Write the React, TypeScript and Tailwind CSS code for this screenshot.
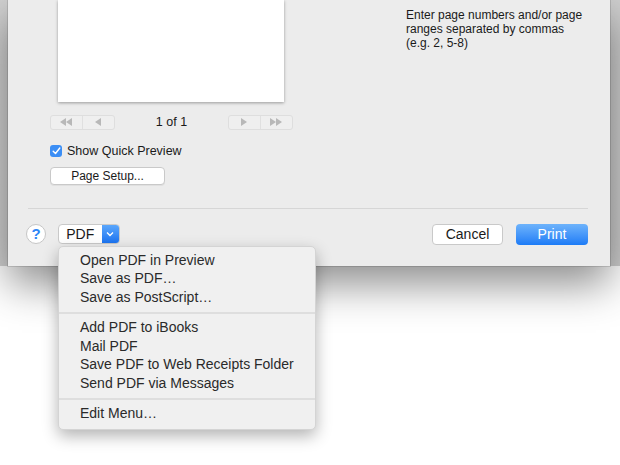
import React from "react";

const font = { fontFamily: '"Liberation Sans", Arial, sans-serif' };

function Tri({ dir }: { dir: "l" | "r" }) {
  return (
    <svg width="6" height="8" viewBox="0 0 6 8">
      {dir === "l" ? <path d="M6 0 L0 4 L6 8 Z" fill="#b8b8b8" /> : <path d="M0 0 L6 4 L0 8 Z" fill="#b8b8b8" />}
    </svg>
  );
}

function NavGroup({ double }: { double: "l" | "r" }) {
  const left = double === "l";
  return (
    <div className="flex h-[15px] w-[65px] rounded-[3px] border border-[#dedede] bg-[#efefef]">
      <div className="flex w-1/2 items-center justify-center border-r border-[#e0e0e0]">
        {left ? (
          <div className="flex"><Tri dir="l" /><Tri dir="l" /></div>
        ) : (
          <Tri dir="r" />
        )}
      </div>
      <div className="flex w-1/2 items-center justify-center">
        {left ? <Tri dir="l" /> : <div className="flex"><Tri dir="r" /><Tri dir="r" /></div>}
      </div>
    </div>
  );
}

const items1 = ["Open PDF in Preview", "Save as PDF…", "Save as PostScript…"];
const items2 = ["Add PDF to iBooks", "Mail PDF", "Save PDF to Web Receipts Folder", "Send PDF via Messages"];

export default function App() {
  return (
    <div className="relative h-[465px] w-[620px] overflow-hidden bg-white" style={font}>
      <div className="h-[266px] w-[620px] bg-gradient-to-r from-[#d2d2d2] via-[#c9c9c9] to-[#cfcfcf] pt-0 pl-[8px] pr-[10px]">
        <div className="relative h-[266px] w-[602px] bg-[#ececec] shadow-[0_18px_40px_rgba(0,0,0,0.45),0_0_0_1px_rgba(0,0,0,0.12)]">
          <div className="flex">
            <div className="flex w-[398px] flex-col pl-[42px]">
              <div className="ml-[8px] h-[102px] w-[226px] bg-white shadow-[0_1px_3px_rgba(0,0,0,0.35)]" />
              <div className="mt-[11px] flex items-center">
                <NavGroup double="l" />
                <div className="w-[113px] text-center text-[12.5px] text-[#1a1a1a]">1 of 1</div>
                <NavGroup double="r" />
              </div>
              <div className="mt-[12px] flex items-center gap-[5px]">
                <div className="flex h-[12px] w-[12px] items-center justify-center rounded-[3px] bg-[#3b8ef5]">
                  <svg width="9" height="8" viewBox="0 0 9 8">
                    <path d="M1.2 4.2 L3.5 6.5 L7.8 1" stroke="white" strokeWidth="1.4" fill="none" strokeLinecap="round" strokeLinejoin="round" />
                  </svg>
                </div>
                <span className="text-[12.5px] leading-[15px] text-[#1a1a1a]">Show Quick Preview</span>
              </div>
              <div className="mt-[8px] flex h-[18px] w-[115px] items-center justify-center rounded-[4px] border border-[#c9c9c9] bg-white text-[12px] text-[#1a1a1a] shadow-[0_1px_0_rgba(0,0,0,0.05)]">
                Page Setup...
              </div>
            </div>
            <div className="pt-[8px] text-[12px] leading-[14px] text-[#1a1a1a]">
              Enter page numbers and/or page
              <br />
              ranges separated by commas
              <br />
              (e.g. 2, 5-8)
            </div>
          </div>
          <div className="mx-[20px] mt-[23px] mr-[22px] h-px bg-[#d6d6d6]" />
          <div className="mt-[15px] flex items-center pl-[18px] pr-[22px]">
            <div className="flex h-[20px] w-[20px] items-center justify-center rounded-full border border-[#c6c6c6] bg-white text-[15px] font-semibold text-[#2f86f6]">
              ?
            </div>
            <div className="ml-[12px] flex h-[20px] w-[62px] overflow-hidden rounded-[4px] border border-[#c9c9c9] bg-white">
              <div className="flex w-[44px] items-center justify-center text-[14px] text-[#1a1a1a]">PDF</div>
              <div className="flex w-[18px] items-center justify-center bg-gradient-to-b from-[#5aa6fb] to-[#1a74f2]">
                <svg width="8" height="6" viewBox="0 0 8 6">
                  <path d="M1 1.5 L4 4.5 L7 1.5" stroke="white" strokeWidth="1.3" fill="none" />
                </svg>
              </div>
            </div>
            <div className="flex-1" />
            <div className="flex h-[21px] w-[71px] items-center justify-center rounded-[4px] border border-[#c9c9c9] bg-white text-[14px] text-[#1a1a1a]">
              Cancel
            </div>
            <div className="ml-[13px] flex h-[21px] w-[72px] items-center justify-center rounded-[4px] bg-gradient-to-b from-[#6db3fb] to-[#1b7bf6] text-[14px] text-white">
              Print
            </div>
          </div>
        </div>
      </div>

      <div className="absolute left-[58px] top-[246px] w-[258px] rounded-[5px] border border-[#d4d4d4] bg-[#f0f0f0] pt-[4px] pb-[6px] text-[14px] text-[#2a2a2a] shadow-[0_6px_16px_rgba(0,0,0,0.3)]">
        {items1.map((t) => (
          <div key={t} className="flex h-[18.5px] items-center pl-[21px]">{t}</div>
        ))}
        <div className="flex h-[12px] items-center"><div className="h-[2px] w-full bg-[#dedede]" /></div>
        {items2.map((t) => (
          <div key={t} className="flex h-[18.5px] items-center pl-[21px]">{t}</div>
        ))}
        <div className="flex h-[12px] items-center"><div className="h-[2px] w-full bg-[#dedede]" /></div>
        <div className="flex h-[18.5px] items-center pl-[21px]">Edit Menu…</div>
      </div>
    </div>
  );
}
